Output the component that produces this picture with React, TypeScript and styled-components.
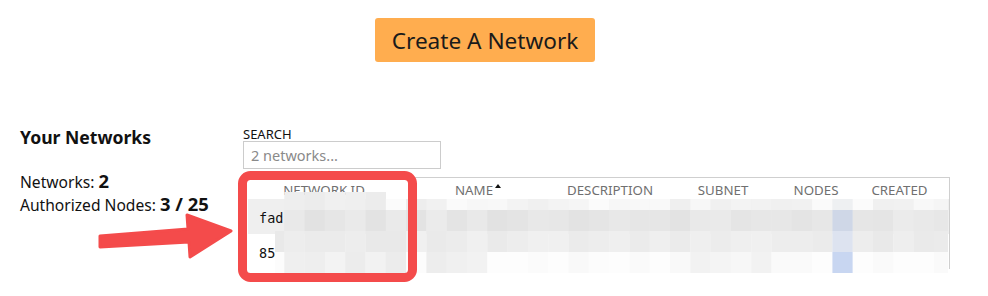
import React from "react";
import styled, { createGlobalStyle } from "styled-components";

const Global = createGlobalStyle`
  html, body { margin: 0; padding: 0; background: #fff; }
  body { font-family: "Noto Sans", "Open Sans", sans-serif; color: #111; }
`;

const Page = styled.div`
  width: 988px;
  height: 296px;
  position: relative;
  overflow: hidden;
`;

const TopBar = styled.div`
  display: flex;
  padding: 18px 0 0 375px;
  height: 44px;
`;

const CreateButton = styled.button`
  width: 220px;
  height: 44px;
  border: none;
  border-radius: 3px;
  background: #ffad4f;
  color: #1a1a1a;
  font-family: "Noto Sans", sans-serif;
  font-size: 22.6px;
  padding: 0;
  cursor: pointer;
`;

const Main = styled.div`
  display: flex;
  margin-top: 63px;
`;

const Side = styled.div`
  width: 243px;
  padding-left: 20px;
  box-sizing: border-box;
  flex-shrink: 0;
`;

const SideTitle = styled.div`
  font-size: 17.6px;
  font-weight: 700;
  line-height: 20px;
  margin-top: 2px;
`;

const Stat = styled.div<{ $first?: boolean }>`
  font-size: 15.6px;
  line-height: 22px;
  margin-top: ${(p) => (p.$first ? "23px" : "0")};
  b { font-size: 18.4px; font-weight: 700; }
`;

const Content = styled.div`
  display: flex;
  flex-direction: column;
`;

const SearchLabel = styled.div`
  font-size: 13px;
  line-height: 14px;
  margin-top: 2px;
`;

const SearchInput = styled.input`
  width: 198px;
  height: 28px;
  box-sizing: border-box;
  border: 1px solid #cccccc;
  padding: 0 7px;
  font-family: "Noto Sans", sans-serif;
  font-size: 14.5px;
  margin: 0;
  outline: none;
  &::placeholder { color: #8a8a8a; }
`;

const TableWrap = styled.div`
  position: relative;
  margin-top: 8px;
  margin-left: 5px;
  width: 701px;
`;

const Table = styled.table`
  border-collapse: collapse;
  width: 701px;
  table-layout: fixed;
  border-top: 1px solid #cfcfcf;
  border-right: 1px solid #cfcfcf;
`;

const Th = styled.th<{ $w: number }>`
  width: ${(p) => p.$w}px;
  height: 21px;
  padding: 0;
  font-weight: 400;
  font-size: 13.3px;
  color: #707070;
  text-align: center;
  vertical-align: bottom;
  line-height: 18px;
`;

const Caret = styled.span`
  display: inline-block;
  width: 0;
  height: 0;
  border-left: 3.5px solid transparent;
  border-right: 3.5px solid transparent;
  border-bottom: 4px solid #111;
  vertical-align: 7px;
  margin-left: 2px;
`;

const Row = styled.tr<{ $striped?: boolean }>`
  height: 35px;
  background: ${(p) => (p.$striped ? "#efefef" : "#fff")};
`;

const IdCell = styled.td`
  padding: 2px 0 0 11px;
  font-family: "DejaVu Sans Mono", "Liberation Mono", monospace;
  font-size: 13.5px;
  color: #111;
`;

const Td = styled.td``;

const Overlay = styled.svg`
  position: absolute;
  left: 0;
  top: 0;
  pointer-events: none;
`;

const Annot = styled.svg`
  position: absolute;
  left: 0;
  top: 0;
  pointer-events: none;
`;

const colX = (i: number) => 264 + i * 20.3;
const rowsY = [200, 211, 232, 253];
const rowsH = [11, 21, 21, 21];

function hash(i: number, j: number) {
  const s = Math.sin(i * 12.9898 + j * 78.233) * 43758.5453;
  return s - Math.floor(s);
}

function cellColor(r: number, c: number): string | null {
  const x = colX(c);
  if (r <= 1 && x < 280) return null;
  if (x > 948) return null;
  const isBlue = x > 830 && x < 845;
  if (isBlue) {
    if (r === 0) return "#eef0f2";
    if (r === 1) return "#cfd7e7";
    if (r === 2) return "#dde3f0";
    return "#c8d6f1";
  }
  const h = hash(r, c);
  let base: number;
  if (r === 0) {
    base = 236 + Math.floor(h * 16);
  } else if (r === 1) {
    base = 226 + Math.floor(h * 10);
  } else if (r === 2) {
    base = 233 + Math.floor(h * 8);
  } else {
    if ((x > 280 && x < 390) || (x > 420 && x < 470)) base = 236 + Math.floor(h * 8);
    else if (x > 680 && x < 770) base = 242 + Math.floor(h * 6);
    else base = 249 + Math.floor(h * 6);
  }
  const v = Math.min(253, base);
  return `rgb(${v},${v},${v})`;
}

const Mosaic: React.FC = () => {
  const cells: React.ReactNode[] = [];
  for (let r = 0; r < 4; r++) {
    for (let c = 0; c < 35; c++) {
      const col = cellColor(r, c);
      if (!col) continue;
      let x = colX(c);
      let w = 20.5;
      if (x + w > 948) w = 948 - x;
      let y = rowsY[r];
      let h = rowsH[r];
      if (r === 0 && x > 280 && x < 370) {
        y = 193;
        h = 18;
      }
      if (r >= 2 && c === 0) {
        x = 275;
        w = 264 + 20.3 - 275 + 0.5;
      }
      cells.push(
        <rect key={`${r}-${c}`} x={x - 248} y={y - 178} width={w} height={h} fill={col} />
      );
    }
  }
  return (
    <Overlay width={720} height={110} viewBox="0 0 720 110">
      {cells}
    </Overlay>
  );
};

const Annotations: React.FC = () => (
  <Annot width={988} height={296} viewBox="0 0 988 296">
    <rect x={242.5} y={175.5} width={170} height={102} rx={8} fill="none" stroke="#f44b4b" strokeWidth={9} />
    <polygon
      points="100,236 188,229 187,215 231,231 190,257 189,242 100,247"
      fill="#f44b4b"
      stroke="#f44b4b"
      strokeWidth={3}
      strokeLinejoin="round"
    />
  </Annot>
);

const cols: { label: string; w: number; caret?: boolean }[] = [
  { label: "NETWORK ID", w: 152 },
  { label: "NAME", w: 156, caret: true },
  { label: "DESCRIPTION", w: 108 },
  { label: "SUBNET", w: 118 },
  { label: "NODES", w: 68 },
  { label: "CREATED", w: 99 },
];

export default function App() {
  return (
    <Page>
      <Global />
      <TopBar>
        <CreateButton>Create A Network</CreateButton>
      </TopBar>
      <Main>
        <Side>
          <SideTitle>Your Networks</SideTitle>
          <Stat $first>
            Networks: <b>2</b>
          </Stat>
          <Stat>
            Authorized Nodes: <b>3 / 25</b>
          </Stat>
        </Side>
        <Content>
          <SearchLabel>SEARCH</SearchLabel>
          <SearchInput placeholder="2 networks..." />
          <TableWrap>
            <Table>
              <thead>
                <tr>
                  {cols.map((c) => (
                    <Th key={c.label} $w={c.w}>
                      {c.label}
                      {c.caret && <Caret />}
                    </Th>
                  ))}
                </tr>
              </thead>
              <tbody>
                <Row $striped>
                  <IdCell>fad</IdCell>
                  <Td />
                  <Td />
                  <Td />
                  <Td />
                  <Td />
                </Row>
                <Row>
                  <IdCell>85</IdCell>
                  <Td />
                  <Td />
                  <Td />
                  <Td />
                  <Td />
                </Row>
              </tbody>
            </Table>
            <Mosaic />
          </TableWrap>
        </Content>
      </Main>
      <Annotations />
    </Page>
  );
}
